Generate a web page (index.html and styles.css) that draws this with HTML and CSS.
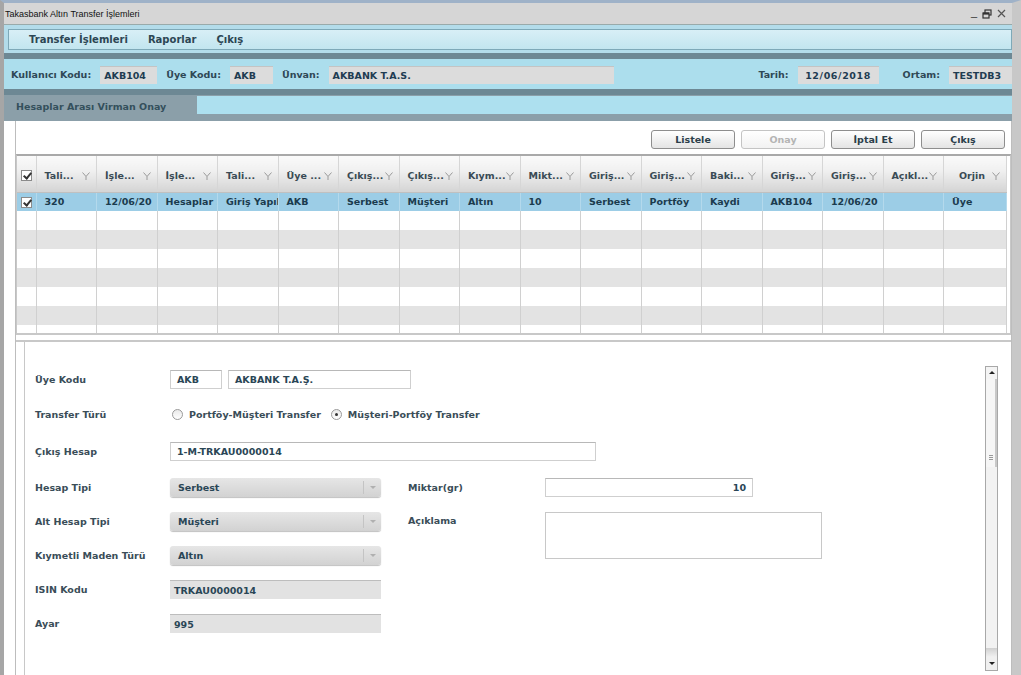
FILE: index.html
```html
<!DOCTYPE html>
<html lang="tr">
<head>
<meta charset="utf-8">
<title>Takasbank Altın Transfer İşlemleri</title>
<link rel="stylesheet" href="styles.css">
</head>
<body>
<div class="app">
  <div class="titlebar">
    <span class="title">Takasbank Altın Transfer İşlemleri</span>
    <span class="winctl">
      <span class="wmin">_</span>
      <svg class="wmax" width="10" height="10" viewBox="0 0 10 10"><rect x="3" y="1" width="6" height="5" fill="none" stroke="#333" stroke-width="1.2"/><rect x="1" y="4" width="6" height="5" fill="#d6d6d6" stroke="#333" stroke-width="1.2"/><line x1="1" y1="4.6" x2="7" y2="4.6" stroke="#333" stroke-width="2"/></svg>
      <svg class="wclose" width="9" height="9" viewBox="0 0 9 9"><path d="M1 1L8 8M8 1L1 8" stroke="#555" stroke-width="1.2"/></svg>
    </span>
  </div>
  <div class="menuwrap">
    <div class="menubar">
      <span class="menuitem">Transfer İşlemleri</span>
      <span class="menuitem">Raporlar</span>
      <span class="menuitem">Çıkış</span>
    </div>
  </div>
  <div class="band"></div>
  <div class="infobar">
    <span class="ilabel">Kullanıcı Kodu:</span><span class="ibox w57">AKB104</span>
    <span class="ilabel">Üye Kodu:</span><span class="ibox w43">AKB</span>
    <span class="ilabel">Ünvan:</span><span class="ibox w285">AKBANK T.A.S.</span>
    <span class="spacer"></span>
    <span class="ilabel">Tarih:</span><span class="ibox w81 wide">12/06/2018</span>
    <span class="ilabel">Ortam:</span><span class="ibox w63">TESTDB3</span>
  </div>
  <div class="band"></div>
  <div class="tabrow">
    <div class="tab">Hesaplar Arası Virman Onay</div>
    <div class="tabstrip"></div>
  </div>
  <div class="content">
    <div class="panel">
      <div class="toolbar">
        <button class="btn">Listele</button>
        <button class="btn disabled">Onay</button>
        <button class="btn">İptal Et</button>
        <button class="btn">Çıkış</button>
      </div>
      <div class="grid">
        <table class="tbl">
          <colgroup>
            <col class="c0"><col class="c"><col class="c"><col class="c"><col class="c"><col class="c"><col class="c"><col class="c"><col class="c"><col class="c"><col class="c"><col class="c"><col class="c"><col class="c"><col class="c"><col class="c"><col class="clast">
          </colgroup>
          <thead>
            <tr>
              <th class="chk"><span class="cb on"></span></th>
              <th><span class="ht">Tali...</span><svg class="flt" width="8" height="8" viewBox="0 0 8 8"><path d="M0.5 0.5L4 4.5L7.5 0.5M4 4.5V8" fill="none" stroke="#9a9a9a"/></svg></th>
              <th><span class="ht">İşle...</span><svg class="flt" width="8" height="8" viewBox="0 0 8 8"><path d="M0.5 0.5L4 4.5L7.5 0.5M4 4.5V8" fill="none" stroke="#9a9a9a"/></svg></th>
              <th><span class="ht">İşle...</span><svg class="flt" width="8" height="8" viewBox="0 0 8 8"><path d="M0.5 0.5L4 4.5L7.5 0.5M4 4.5V8" fill="none" stroke="#9a9a9a"/></svg></th>
              <th><span class="ht">Tali...</span><svg class="flt" width="8" height="8" viewBox="0 0 8 8"><path d="M0.5 0.5L4 4.5L7.5 0.5M4 4.5V8" fill="none" stroke="#9a9a9a"/></svg></th>
              <th><span class="ht">Üye ...</span><svg class="flt" width="8" height="8" viewBox="0 0 8 8"><path d="M0.5 0.5L4 4.5L7.5 0.5M4 4.5V8" fill="none" stroke="#9a9a9a"/></svg></th>
              <th><span class="ht">Çıkış...</span><svg class="flt" width="8" height="8" viewBox="0 0 8 8"><path d="M0.5 0.5L4 4.5L7.5 0.5M4 4.5V8" fill="none" stroke="#9a9a9a"/></svg></th>
              <th><span class="ht">Çıkış...</span><svg class="flt" width="8" height="8" viewBox="0 0 8 8"><path d="M0.5 0.5L4 4.5L7.5 0.5M4 4.5V8" fill="none" stroke="#9a9a9a"/></svg></th>
              <th><span class="ht">Kıym...</span><svg class="flt" width="8" height="8" viewBox="0 0 8 8"><path d="M0.5 0.5L4 4.5L7.5 0.5M4 4.5V8" fill="none" stroke="#9a9a9a"/></svg></th>
              <th><span class="ht">Mikt...</span><svg class="flt" width="8" height="8" viewBox="0 0 8 8"><path d="M0.5 0.5L4 4.5L7.5 0.5M4 4.5V8" fill="none" stroke="#9a9a9a"/></svg></th>
              <th><span class="ht">Giriş...</span><svg class="flt" width="8" height="8" viewBox="0 0 8 8"><path d="M0.5 0.5L4 4.5L7.5 0.5M4 4.5V8" fill="none" stroke="#9a9a9a"/></svg></th>
              <th><span class="ht">Giriş...</span><svg class="flt" width="8" height="8" viewBox="0 0 8 8"><path d="M0.5 0.5L4 4.5L7.5 0.5M4 4.5V8" fill="none" stroke="#9a9a9a"/></svg></th>
              <th><span class="ht">Baki...</span><svg class="flt" width="8" height="8" viewBox="0 0 8 8"><path d="M0.5 0.5L4 4.5L7.5 0.5M4 4.5V8" fill="none" stroke="#9a9a9a"/></svg></th>
              <th><span class="ht">Giriş...</span><svg class="flt" width="8" height="8" viewBox="0 0 8 8"><path d="M0.5 0.5L4 4.5L7.5 0.5M4 4.5V8" fill="none" stroke="#9a9a9a"/></svg></th>
              <th><span class="ht">Giriş...</span><svg class="flt" width="8" height="8" viewBox="0 0 8 8"><path d="M0.5 0.5L4 4.5L7.5 0.5M4 4.5V8" fill="none" stroke="#9a9a9a"/></svg></th>
              <th><span class="ht">Açıkl...</span><svg class="flt" width="8" height="8" viewBox="0 0 8 8"><path d="M0.5 0.5L4 4.5L7.5 0.5M4 4.5V8" fill="none" stroke="#9a9a9a"/></svg></th>
              <th><span class="ht center">Orjin</span><svg class="flt" width="8" height="8" viewBox="0 0 8 8"><path d="M0.5 0.5L4 4.5L7.5 0.5M4 4.5V8" fill="none" stroke="#9a9a9a"/></svg></th>
            </tr>
          </thead>
          <tbody>
            <tr class="sel">
              <td class="chk"><span class="cb on"></span></td>
              <td>320</td><td>12/06/20</td><td>Hesaplar .</td><td>Giriş Yapıl</td><td>AKB</td><td>Serbest</td><td>Müşteri</td><td>Altın</td><td>10</td><td>Serbest</td><td>Portföy</td><td>Kaydi</td><td>AKB104</td><td>12/06/20</td><td></td><td>Üye</td>
            </tr>
            <tr><td class="chk"></td><td></td><td></td><td></td><td></td><td></td><td></td><td></td><td></td><td></td><td></td><td></td><td></td><td></td><td></td><td></td><td></td></tr>
            <tr class="alt"><td class="chk"></td><td></td><td></td><td></td><td></td><td></td><td></td><td></td><td></td><td></td><td></td><td></td><td></td><td></td><td></td><td></td><td></td></tr>
            <tr><td class="chk"></td><td></td><td></td><td></td><td></td><td></td><td></td><td></td><td></td><td></td><td></td><td></td><td></td><td></td><td></td><td></td><td></td></tr>
            <tr class="alt"><td class="chk"></td><td></td><td></td><td></td><td></td><td></td><td></td><td></td><td></td><td></td><td></td><td></td><td></td><td></td><td></td><td></td><td></td></tr>
            <tr><td class="chk"></td><td></td><td></td><td></td><td></td><td></td><td></td><td></td><td></td><td></td><td></td><td></td><td></td><td></td><td></td><td></td><td></td></tr>
            <tr class="alt"><td class="chk"></td><td></td><td></td><td></td><td></td><td></td><td></td><td></td><td></td><td></td><td></td><td></td><td></td><td></td><td></td><td></td><td></td></tr>
            <tr><td class="chk"></td><td></td><td></td><td></td><td></td><td></td><td></td><td></td><td></td><td></td><td></td><td></td><td></td><td></td><td></td><td></td><td></td></tr>
          </tbody>
        </table>
      </div>
      <div class="formpanel">
        <div class="forminner">
          <div class="form">
            <div class="frow r1">
              <span class="flabel">Üye Kodu</span>
              <span class="inp w52">AKB</span>
              <span class="inp w183">AKBANK T.A.Ş.</span>
            </div>
            <div class="frow r2">
              <span class="flabel">Transfer Türü</span>
              <span class="radio"></span><span class="rlabel">Portföy-Müşteri Transfer</span>
              <span class="radio on"></span><span class="rlabel">Müşteri-Portföy Transfer</span>
            </div>
            <div class="frow r3">
              <span class="flabel">Çıkış Hesap</span>
              <span class="inp w426">1-M-TRKAU0000014</span>
            </div>
            <div class="cols">
              <div class="colL">
                <div class="frow">
                  <span class="flabel">Hesap Tipi</span>
                  <span class="sel211"><span class="sv">Serbest</span><span class="sarrow"></span></span>
                </div>
                <div class="frow">
                  <span class="flabel">Alt Hesap Tipi</span>
                  <span class="sel211"><span class="sv">Müşteri</span><span class="sarrow"></span></span>
                </div>
                <div class="frow">
                  <span class="flabel">Kıymetli Maden Türü</span>
                  <span class="sel211"><span class="sv">Altın</span><span class="sarrow"></span></span>
                </div>
                <div class="frow">
                  <span class="flabel">ISIN Kodu</span>
                  <span class="ro">TRKAU0000014</span>
                </div>
                <div class="frow">
                  <span class="flabel">Ayar</span>
                  <span class="ro">995</span>
                </div>
              </div>
              <div class="colR">
                <div class="frow">
                  <span class="flabel2">Miktar(gr)</span>
                  <span class="inp w208 right">10</span>
                </div>
                <div class="frow top">
                  <span class="flabel2">Açıklama</span>
                  <span class="textarea"></span>
                </div>
              </div>
            </div>
          </div>
          <div class="scrollbar">
            <span class="sbtn up"></span>
            <span class="strack"><span class="thumb"><span class="grip"></span></span></span>
            <span class="sbtn down"></span>
          </div>
        </div>
      </div>
    </div>
  </div>
</div>
</body>
</html>
```

FILE: styles.css
```css
* { box-sizing: border-box; }
html, body { margin: 0; padding: 0; }
body {
  width: 1021px;
  height: 675px;
  overflow: hidden;
  background: #d0d0d0;
  font-family: "DejaVu Sans", Verdana, sans-serif;
  font-size: 9.5px;
  font-weight: bold;
  color: #3a4d58;
}
.app {
  width: 1021px;
  height: 675px;
  display: flex;
  flex-direction: column;
  border-top: 3px solid #9fb2c8;
  border-left: 4px solid #a6a6a6;
  border-right: 9px solid #c8c8c8;
  background: #d6d6d6;
}
.titlebar {
  height: 22px;
  display: flex;
  align-items: center;
  justify-content: space-between;
  padding: 0 6px 0 1px;
  background: #d6d6d6;
  border-bottom: 1px solid #9aa;
}
.title {
  font-family: "Liberation Sans", Arial, sans-serif;
  font-size: 9px;
  font-weight: normal;
  color: #111;
}
.winctl { display: flex; align-items: center; gap: 5px; }
.wmin { font-family: "Liberation Sans", Arial, sans-serif; font-size: 11px; color: #333; font-weight: normal; margin-top: -4px; }
.menuwrap {
  background: #b3dcea;
  padding: 4px 0 3px 4px;
}
.menubar {
  height: 21px;
  display: flex;
  align-items: center;
  gap: 20px;
  padding-left: 20px;
  border: 1px solid #7ea9b8;
  background: linear-gradient(#d8eff6, #c2e5ef);
}
.menuitem {
  font-size: 10px;
  color: #2c4654;
}
.band {
  height: 6px;
  background: #6d8894;
  flex: none;
}
.infobar {
  height: 30px;
  display: flex;
  align-items: center;
  padding: 1px 0 0 7px;
  background: #acdeed;
  flex: none;
}
.ilabel { color: #2f4856; margin-right: 9px; }
.ibox {
  height: 18px;
  display: flex;
  align-items: center;
  padding: 1px 0 0 4px;
  background: #dcdcdc;
  border-top: 1px solid #c4c4c4;
  color: #1f3c52;
  margin-right: 9px;
}
.ibox.wide { letter-spacing: 0.6px; justify-content: center; padding-left: 0; }
.w57 { width: 57px; }
.w43 { width: 43px; }
.w285 { width: 285px; margin-right: 0; }
.w81 { width: 81px; margin-right: 24px; }
.w63 { width: 63px; margin-right: 0; }
.spacer { flex: 1; }
.tabrow {
  height: 26px;
  display: flex;
  background: #8b9fa9;
  flex: none;
}
.tab {
  width: 193px;
  padding: 6px 0 0 12px;
  color: #34505c;
}
.tabstrip {
  flex: 1;
  height: 18px;
  margin-top: 1px;
  background: #ade0ef;
}
.content {
  flex: 1;
  background: #fff;
  padding: 0 0 0 11px;
  overflow: hidden;
}
.panel {
  height: 100%;
  border-left: 1px solid #bdbdbd;
  border-right: 1px solid #bdbdbd;
  padding-top: 9px;
}
.toolbar {
  display: flex;
  justify-content: flex-end;
  gap: 6px;
  padding-right: 6px;
  height: 24px;
}
.btn {
  width: 84px;
  height: 19px;
  border: 1px solid #8e8e8e;
  border-radius: 3px;
  background: linear-gradient(#ffffff, #e4e4e4);
  font-family: inherit;
  font-size: 9.5px;
  font-weight: bold;
  color: #2b3e4a;
  padding: 0;
  margin: 0;
}
.btn.disabled { border-color: #c4c4c4; color: #b4b4b4; background: linear-gradient(#fff, #f2f2f2); }
.grid {
  height: 181px;
  overflow: hidden;
  border-top: 2px solid #a9a9a9;
  border-bottom: 2px solid #c8c8c8;
  border-left: 1px solid #c8c8c8;
  border-right: 1px solid #c8c8c8;
}
.tbl {
  border-collapse: collapse;
  table-layout: fixed;
  width: 990px;
}
.c0 { width: 19px; }
.c { width: 60.5px; }
.clast { width: auto; }
.tbl th {
  height: 36px;
  padding: 3px 0 0 8px;
  background: linear-gradient(#fafafa, #f0f0f0 40%, #d4d4d4);
  border-right: 1px solid #d6d6d6;
  border-bottom: 1px solid #c0c0c0;
  text-align: left;
  white-space: nowrap;
  overflow: hidden;
  color: #3a4b55;
  font-weight: bold;
  position: relative;
}
.tbl th.chk { padding: 3px 0 0 4px; }
.tbl th .ht { display: inline-block; }
.tbl th .ht.center { margin-left: 7px; }
.flt {
  position: absolute;
  right: 6px;
  top: 16px;
}
.tbl td {
  height: 19px;
  padding: 0 0 0 8px;
  border-right: 1px solid #d0d0d0;
  white-space: nowrap;
  overflow: hidden;
  color: #24404f;
}
.tbl td.chk { padding: 0 0 0 4px; }
.tbl tr.sel td { background: #9ccde6; color: #1b3b4e; border-right-color: #b4d9ec; }
.tbl tr.alt td { background: #e3e3e3; }
.cb {
  display: inline-block;
  width: 11px;
  height: 11px;
  border: 1px solid #8a8a8a;
  background: #fff;
  vertical-align: middle;
  position: relative;
}
.cb.on::after {
  content: "";
  position: absolute;
  left: 3px;
  top: 0px;
  width: 3px;
  height: 6px;
  border-right: 2px solid #333;
  border-bottom: 2px solid #333;
  transform: rotate(40deg);
}
.formpanel {
  margin-top: 5px;
  height: 340px;
  border-top: 2px solid #c8c8c8;
  padding-left: 8px;
}
.forminner {
  height: 100%;
  border-left: 1px solid #c8c8c8;
  display: flex;
}
.form {
  flex: 1;
  padding: 28px 0 0 10px;
}
.frow {
  display: flex;
  align-items: center;
  height: 19px;
  margin-bottom: 15px;
}
.frow.r1 { margin-bottom: 16px; }
.frow.r2 { margin-bottom: 18px; }
.frow.r3 { margin-bottom: 17px; }
.frow.top { align-items: flex-start; margin-bottom: 0; height: 47px; }
.flabel { width: 135px; color: #3a4d58; }
.flabel2 { width: 137px; color: #3a4d58; }
.frow.top .flabel2 { padding-top: 3px; }
.inp {
  height: 19px;
  display: flex;
  align-items: center;
  padding: 0 6px;
  border: 1px solid #cfcfcf;
  border-top-color: #b8b8b8;
  background: #fff;
  color: #2a4656;
  margin-right: 6px;
}
.inp.right { justify-content: flex-end; }
.w52 { width: 52px; }
.w183 { width: 183px; }
.w426 { width: 426px; }
.w208 { width: 208px; }
.radio {
  width: 11px;
  height: 11px;
  border-radius: 50%;
  border: 1px solid #9a9a9a;
  background: linear-gradient(#e9e9e9, #fff);
  margin: 0 6px 0 2px;
  position: relative;
}
.radio.on::after {
  content: "";
  position: absolute;
  left: 3px;
  top: 3px;
  width: 3px;
  height: 3px;
  border-radius: 50%;
  background: #333;
}
.rlabel { margin-right: 8px; color: #3a4d58; }
.cols { display: flex; }
.colL { width: 373px; }
.colR { flex: 1; }
.sel211 {
  width: 211px;
  height: 19px;
  display: flex;
  align-items: center;
  border-radius: 3px;
  background: linear-gradient(#e6e6e6, #d2d2d2);
  box-shadow: 0 1px 1px #c0c0c0;
}
.sv { flex: 1; padding-left: 8px; color: #2a4656; }
.sarrow {
  width: 18px;
  height: 13px;
  border-left: 1px solid #c4c4c4;
  position: relative;
}
.sarrow::after {
  content: "";
  position: absolute;
  left: 6px;
  top: 5px;
  border-left: 3px solid transparent;
  border-right: 3px solid transparent;
  border-top: 3px solid #b0b0b0;
}
.ro {
  width: 211px;
  height: 19px;
  display: flex;
  align-items: center;
  padding-left: 4px;
  background: #e2e2e2;
  border-top: 1px solid #bdbdbd;
  color: #2a4656;
}
.textarea {
  width: 277px;
  height: 47px;
  border: 1px solid #c8c8c8;
  background: #fff;
}
.scrollbar {
  width: 13px;
  margin: 24px 13px 9px 0;
  display: flex;
  flex-direction: column;
  border: 1px solid #a8a8a8;
  background: #f2f2f2;
}
.sbtn {
  height: 12px;
  position: relative;
  background: #f4f4f4;
}
.sbtn::after {
  content: "";
  position: absolute;
  left: 3px;
  top: 4px;
  border-left: 3px solid transparent;
  border-right: 3px solid transparent;
}
.sbtn.up::after { border-bottom: 3px solid #222; }
.sbtn.down { background: linear-gradient(#d0d0d0, #f0f0f0 40%); height: 22px; }
.sbtn.down::after { border-top: 3px solid #222; top: 14px; }
.strack { flex: 1; position: relative; }
.thumb {
  position: absolute;
  left: 0;
  right: 0;
  top: 0;
  height: 88px;
  border-right: 2px solid #c8c8c8;
  background: #f6f6f6;
}
.grip {
  position: absolute;
  left: 3px;
  top: 76px;
  width: 4px;
  height: 6px;
  background: repeating-linear-gradient(#999 0 1px, transparent 1px 2px);
}
```
